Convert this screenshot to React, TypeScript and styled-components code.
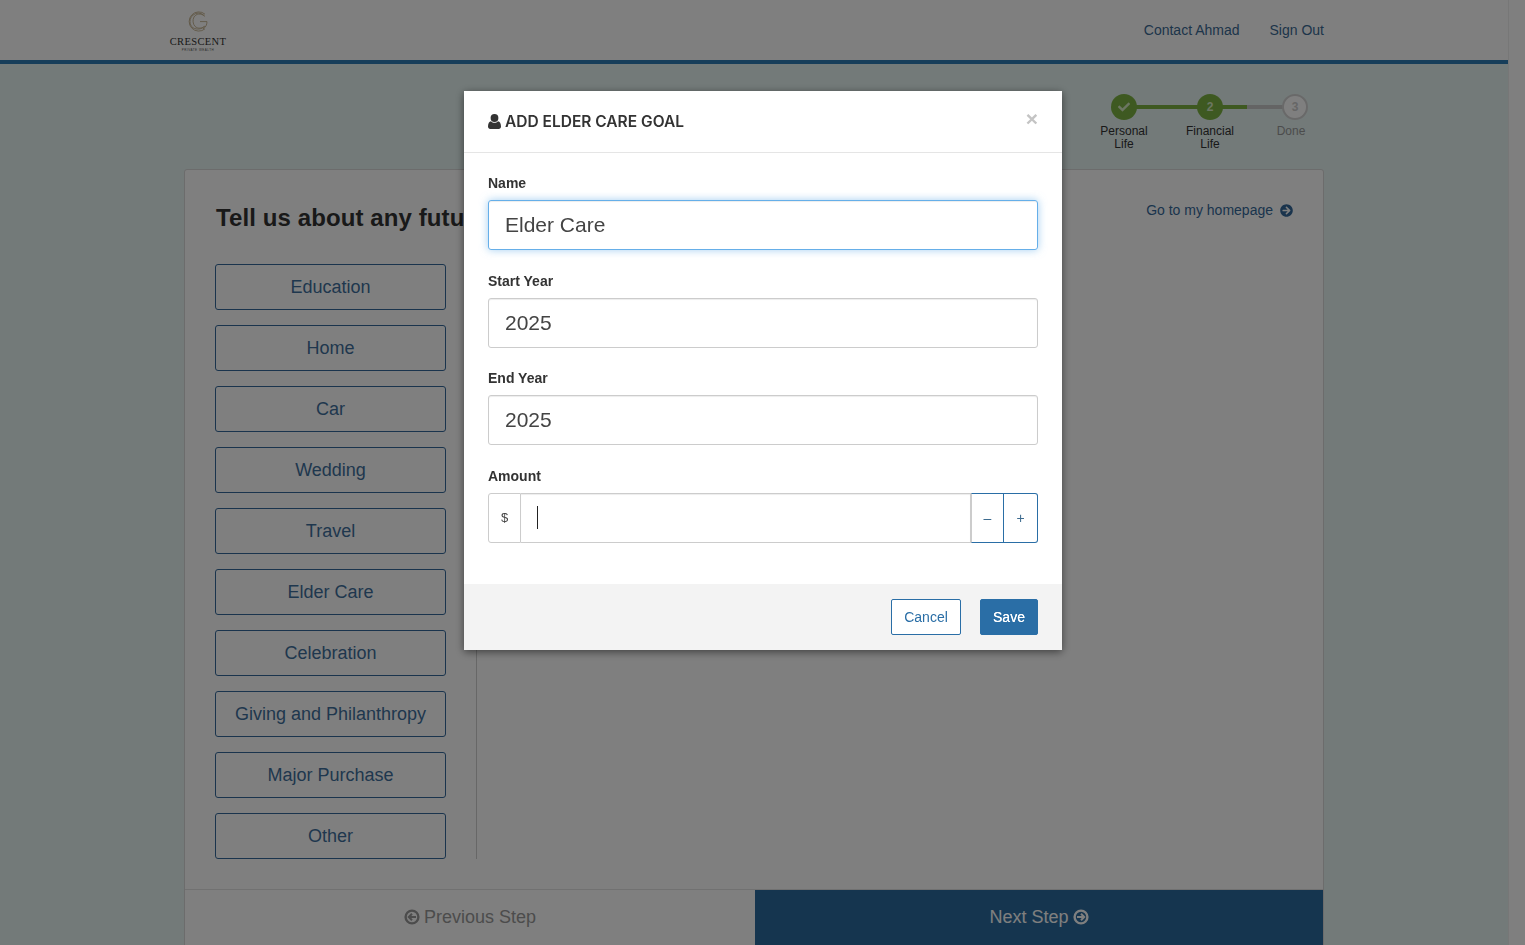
import React from "react";
import styled, { createGlobalStyle } from "styled-components";
import { FaCheck, FaArrowCircleRight } from "react-icons/fa";

const Global = createGlobalStyle`
  html, body { margin: 0; height: 100%; overflow: hidden; }
  body { font-family: "Liberation Sans", Arial, sans-serif; background: #e6f4f2; }
  * { box-sizing: border-box; }
`;

const Shell = styled.div`
  display: flex;
  height: 945px;
  overflow: hidden;
`;
const Page = styled.div`
  width: 1508px;
  flex: none;
  display: flex;
  flex-direction: column;
`;
const ScrollTrack = styled.div`
  flex: 1;
  background: #ffffff;
  border-left: 1px solid #eeeeee;
`;
const Header = styled.header`
  height: 64px;
  flex: none;
  background: #ffffff;
  border-bottom: 4px solid #2f7db5;
  display: flex;
  justify-content: space-between;
  padding: 0 184px 0 169px;
`;
const Logo = styled.div`
  width: 58px;
  padding-top: 11px;
  display: flex;
  flex-direction: column;
  align-items: center;
`;
const LogoName = styled.span`
  font-family: "Liberation Serif", serif;
  font-size: 10.5px;
  line-height: 10px;
  letter-spacing: 0.35px;
  margin-top: 5px;
  color: #333333;
  white-space: nowrap;
`;
const LogoSub = styled.span`
  font-family: "Liberation Sans", sans-serif;
  font-size: 3px;
  line-height: 4px;
  letter-spacing: 0.5px;
  margin-top: 1px;
  color: #555555;
  white-space: nowrap;
`;
const TopNav = styled.nav`
  display: flex;
  gap: 30px;
  padding-top: 22px;
`;
const TopLink = styled.a`
  font-size: 14px;
  line-height: 16px;
  color: #3a6a94;
`;
const Main = styled.main`
  width: 1140px;
  margin-left: 184px;
  display: flex;
  flex-direction: column;
`;
const Stepper = styled.div`
  height: 105px;
  flex: none;
  padding-top: 30px;
  display: flex;
  justify-content: flex-end;
`;
const Step = styled.div<{ $w: number }>`
  width: ${(p) => p.$w}px;
  flex: none;
  display: flex;
  flex-direction: column;
  align-items: center;
  position: relative;
`;
const StepDot = styled.div<{ $on: boolean }>`
  width: 26px;
  height: 26px;
  border-radius: 50%;
  display: flex;
  align-items: center;
  justify-content: center;
  font-size: 12px;
  font-weight: 700;
  color: ${(p) => (p.$on ? "#d8ecc4" : "#cccccc")};
  background: ${(p) => (p.$on ? "#7cb342" : "#ffffff")};
  border: ${(p) => (p.$on ? "none" : "2px solid #d3d3d3")};
  margin-left: ${(p) => (p.$on ? 0 : 13)}px;
  position: relative;
  z-index: 1;
`;
const StepLine = styled.div<{ $green: number }>`
  position: absolute;
  left: 50%;
  top: 11px;
  width: 86px;
  height: 4px;
  background: linear-gradient(
    to right,
    #7cb342 ${(p) => p.$green}%,
    #c8c8c8 ${(p) => p.$green}%
  );
`;
const StepLabel = styled.div<{ $on: boolean }>`
  margin-top: 5px;
  margin-left: ${(p) => (p.$on ? 0 : 5)}px;
  font-size: 12px;
  line-height: 13px;
  text-align: center;
  color: ${(p) => (p.$on ? "#333333" : "#999999")};
`;
const Card = styled.section`
  flex: none;
  height: 790px;
  border: 1px solid #d8d8d8;
  border-radius: 3px 3px 0 0;
  background: #ffffff;
  display: flex;
  flex-direction: column;
`;
const CardBody = styled.div`
  height: 719px;
  flex: none;
  padding: 0 29px 30px 30px;
  display: flex;
  flex-direction: column;
`;
const TopRow = styled.div`
  height: 94px;
  flex: none;
  display: flex;
  justify-content: space-between;
  align-items: flex-start;
`;
const Title = styled.h2`
  margin: 33px 0 0 1px;
  font-size: 24px;
  line-height: 29px;
  font-weight: 700;
  letter-spacing: 0.1px;
  color: #333333;
  white-space: nowrap;
`;
const HomeLink = styled.a`
  margin-top: 32px;
  margin-right: 1px;
  font-size: 14px;
  line-height: 17px;
  color: #35699a;
  display: flex;
  align-items: center;
  gap: 7px;
`;
const GoalColumn = styled.div`
  width: 262px;
  flex: 1;
  border-right: 1px solid #cfcfcf;
  display: flex;
  flex-direction: column;
  gap: 15px;
`;
const GoalButton = styled.button`
  width: 231px;
  height: 46px;
  flex: none;
  background: #ffffff;
  border: 1px solid #35699a;
  border-radius: 3px;
  font-family: inherit;
  font-size: 18px;
  color: #3f6f9c;
  padding: 0;
`;
const CardFooter = styled.div`
  flex: 1;
  display: flex;
  border-top: 1px solid #e2e2e2;
`;
const FootButton = styled.button<{ $primary?: boolean }>`
  width: ${(p) => (p.$primary ? 568 : 570)}px;
  height: 100%;
  border: none;
  padding: 0 0 14px;
  font-family: inherit;
  font-size: 18px;
  display: flex;
  align-items: center;
  justify-content: center;
  gap: 4px;
  color: ${(p) => (p.$primary ? "#ffffff" : "#999999")};
  background: ${(p) => (p.$primary ? "#2b6b9e" : "#ffffff")};
`;
const Backdrop = styled.div`
  position: fixed;
  inset: 0;
  background: rgba(0, 0, 0, 0.5);
  z-index: 10;
`;
const Modal = styled.div`
  position: fixed;
  z-index: 11;
  left: 464px;
  top: 91px;
  width: 598px;
  height: 559px;
  background: #ffffff;
  box-shadow: 0 2px 8px rgba(0, 0, 0, 0.5);
  display: flex;
  flex-direction: column;
`;
const ModalHeader = styled.div`
  height: 62px;
  flex: none;
  border-bottom: 1px solid #e5e5e5;
  padding: 0 24px;
  display: flex;
  align-items: center;
  gap: 4px;
  position: relative;
`;
const ModalTitle = styled.h4`
  margin: 0;
  font-family: Inter, sans-serif;
  font-size: 15.5px;
  font-weight: 600;
  color: #333333;
  white-space: nowrap;
`;
const Close = styled.span`
  position: absolute;
  right: 24px;
  top: 16px;
  font-size: 21px;
  line-height: 24px;
  font-weight: 700;
  color: #c4c4c4;
`;
const ModalBody = styled.div`
  flex: 1;
  padding: 22px 24px 0;
  display: flex;
  flex-direction: column;
`;
const Field = styled.div`
  height: 97.6px;
  flex: none;
  display: flex;
  flex-direction: column;
`;
const Label = styled.label`
  font-size: 14px;
  line-height: 17px;
  font-weight: 700;
  color: #333333;
  margin-bottom: 8px;
`;
const TextInput = styled.div<{ $focus?: boolean }>`
  height: 50px;
  flex: none;
  display: flex;
  align-items: center;
  padding: 0 16px;
  font-size: 21px;
  color: #444444;
  border-radius: 3px;
  border: 1px solid ${(p) => (p.$focus ? "#66afe9" : "#cccccc")};
  box-shadow: ${(p) =>
    p.$focus
      ? "inset 0 1px 1px rgba(0,0,0,.075), 0 0 8px rgba(102,175,233,.6)"
      : "inset 0 1px 1px rgba(0,0,0,.075)"};
`;
const AmountGroup = styled.div`
  display: flex;
  height: 50px;
  flex: none;
`;
const Addon = styled.div`
  width: 33px;
  flex: none;
  border: 1px solid #cccccc;
  border-radius: 3px 0 0 3px;
  display: flex;
  align-items: center;
  justify-content: center;
  font-size: 13px;
  color: #444444;
`;
const AmountInput = styled.div`
  flex: 1;
  border: 1px solid #cccccc;
  border-left: none;
  box-shadow: inset 0 1px 1px rgba(0, 0, 0, 0.075);
  display: flex;
  align-items: center;
  padding-left: 16px;
`;
const Caret = styled.span`
  width: 1px;
  height: 23px;
  background: #222222;
`;
const StepperButton = styled.button<{ $last?: boolean }>`
  width: ${(p) => (p.$last ? 34 : 33)}px;
  flex: none;
  background: #ffffff;
  border: 1px solid #2a6ea6;
  border-left: ${(p) => (p.$last ? "none" : "1px solid #cccccc")};
  border-radius: ${(p) => (p.$last ? "0 3px 3px 0" : "0")};
  font-family: inherit;
  font-size: 14px;
  color: #3d6b8f;
  padding: 0;
`;
const ModalFooter = styled.div`
  height: 66px;
  flex: none;
  background: #f3f3f3;
  padding-top: 15px;
  padding-right: 24px;
  display: flex;
  justify-content: flex-end;
  gap: 19px;
`;
const ActionButton = styled.button<{ $solid?: boolean }>`
  height: 36px;
  width: ${(p) => (p.$solid ? 58 : 70)}px;
  border: 1px solid #2a6ea6;
  border-radius: 2px;
  font-family: inherit;
  font-size: 14px;
  padding: 0;
  color: ${(p) => (p.$solid ? "#ffffff" : "#2a6ea6")};
  background: ${(p) => (p.$solid ? "#2a6ea6" : "#ffffff")};
  text-shadow: ${(p) => (p.$solid ? "0 0 0.3px #fff" : "none")};
`;

const RingArrow = ({ dir }: { dir: "left" | "right" }) => (
  <svg width="16" height="16" viewBox="0 0 16 16" aria-hidden="true">
    <circle cx="8" cy="8" r="6.4" fill="none" stroke="currentColor" strokeWidth="2.4" />
    <path
      d={dir === "left" ? "M12 8H5.5M8 4.8 4.8 8 8 11.2" : "M4 8h6.5M8 4.8 11.2 8 8 11.2"}
      fill="none"
      stroke="currentColor"
      strokeWidth="2"
    />
  </svg>
);

const UserGlyph = () => (
  <svg width="13" height="15" viewBox="0 0 13 15" aria-hidden="true" fill="#333333">
    <circle cx="6.5" cy="4" r="3.9" />
    <path d="M0 12.5C0 9.5 1.2 7.6 3 7.3 4 8.3 5.2 8.8 6.5 8.8S9 8.3 10 7.3C11.8 7.6 13 9.5 13 12.5 13 14 12 15 10.8 15H2.2C1 15 0 14 0 12.5Z" />
  </svg>
);

const LogoMark = () => (
  <svg width="24" height="21" viewBox="0 0 24 21" aria-hidden="true">
    <g fill="none" stroke="#c2b08c" strokeWidth="0.9">
      <path d="M19 3.2A9.6 9.6 0 1 0 19 17.8" />
      <path d="M18 4.6A7.6 7.6 0 0 0 7 4.2C3 7 3 14 7 16.8 11 19 16 18 18 15.6" />
      <path d="M19 5.4C15 1.8 10 2.6 8 6 6.4 8.8 6.8 13 9 15.4 12 18 16 17.6 19 15" />
      <path d="M14 10.6h7c0 3.2-1.4 6-4 7.2" />
    </g>
  </svg>
);

const goals = [
  "Education",
  "Home",
  "Car",
  "Wedding",
  "Travel",
  "Elder Care",
  "Celebration",
  "Giving and Philanthropy",
  "Major Purchase",
  "Other",
];

export default function App() {
  return (
    <Shell>
      <Global />
      <Page>
        <Header>
          <Logo>
            <LogoMark />
            <LogoName>CRESCENT</LogoName>
            <LogoSub>PRIVATE WEALTH</LogoSub>
          </Logo>
          <TopNav>
            <TopLink>Contact Ahmad</TopLink>
            <TopLink>Sign Out</TopLink>
          </TopNav>
        </Header>
        <Main>
          <Stepper>
            <Step $w={86}>
              <StepLine $green={100} />
              <StepDot $on>
                <FaCheck size={12} />
              </StepDot>
              <StepLabel $on>
                Personal
                <br />
                Life
              </StepLabel>
            </Step>
            <Step $w={86}>
              <StepLine $green={43} />
              <StepDot $on>2</StepDot>
              <StepLabel $on>
                Financial
                <br />
                Life
              </StepLabel>
            </Step>
            <Step $w={71}>
              <StepDot $on={false}>3</StepDot>
              <StepLabel $on={false}>Done</StepLabel>
            </Step>
          </Stepper>
          <Card>
            <CardBody>
              <TopRow>
                <Title>Tell us about any future goals</Title>
                <HomeLink>
                  Go to my homepage <FaArrowCircleRight size={13} />
                </HomeLink>
              </TopRow>
              <GoalColumn>
                {goals.map((g) => (
                  <GoalButton key={g}>{g}</GoalButton>
                ))}
              </GoalColumn>
            </CardBody>
            <CardFooter>
              <FootButton>
                <RingArrow dir="left" /> Previous Step
              </FootButton>
              <FootButton $primary>
                Next Step <RingArrow dir="right" />
              </FootButton>
            </CardFooter>
          </Card>
        </Main>
      </Page>
      <ScrollTrack />
      <Backdrop />
      <Modal>
        <ModalHeader>
          <UserGlyph />
          <ModalTitle>ADD ELDER CARE GOAL</ModalTitle>
          <Close>×</Close>
        </ModalHeader>
        <ModalBody>
          <Field>
            <Label>Name</Label>
            <TextInput $focus>Elder Care</TextInput>
          </Field>
          <Field>
            <Label>Start Year</Label>
            <TextInput>2025</TextInput>
          </Field>
          <Field>
            <Label>End Year</Label>
            <TextInput>2025</TextInput>
          </Field>
          <Field>
            <Label>Amount</Label>
            <AmountGroup>
              <Addon>$</Addon>
              <AmountInput>
                <Caret />
              </AmountInput>
              <StepperButton>–</StepperButton>
              <StepperButton $last>+</StepperButton>
            </AmountGroup>
          </Field>
        </ModalBody>
        <ModalFooter>
          <ActionButton>Cancel</ActionButton>
          <ActionButton $solid>Save</ActionButton>
        </ModalFooter>
      </Modal>
    </Shell>
  );
}
